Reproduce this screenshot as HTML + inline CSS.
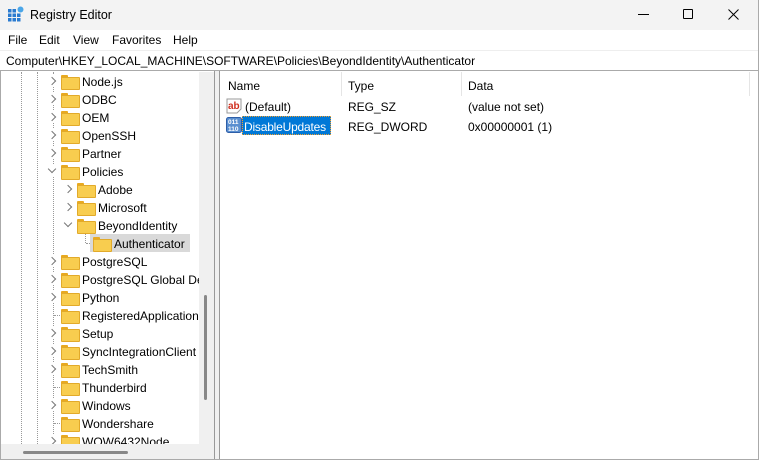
<!DOCTYPE html><html><head><style>
*{margin:0;padding:0;box-sizing:border-box}
body{width:759px;height:460px;overflow:hidden;background:#fff;font-family:"Liberation Sans",sans-serif;font-size:12px;color:#000;position:relative}
.a{position:absolute;white-space:nowrap}
.fold{position:absolute;width:17px;height:13px}
.fold:before{content:"";position:absolute;left:0;top:0;width:7px;height:3px;background:#e8a920;border-radius:1px 1px 0 0}
.fold:after{content:"";position:absolute;left:0;top:2px;width:17px;height:11px;background:#f8cd4f;border:1px solid #e2aa2a;border-radius:1px}
.chev{position:absolute;width:6px;height:6px;border-right:1.3px solid #777;border-bottom:1.3px solid #777;transform:rotate(-45deg)}
.chev.d{transform:rotate(45deg)}
.dot{position:absolute;border-left:1px dotted #999}
.hd{position:absolute;border-top:1px dotted #999;height:0}
</style></head><body>
<div class="a" style="left:0;top:0;width:759px;height:30px;background:#f3f3f3"></div>
<svg class="a" style="left:8px;top:6px" width="16" height="16" viewBox="0 0 16 16"><g fill="#2a7bd0"><rect x="0" y="3" width="3.5" height="3.5"/><rect x="4.5" y="3" width="3.5" height="3.5"/><rect x="0" y="7.5" width="3.5" height="3.5"/><rect x="4.5" y="7.5" width="3.5" height="3.5"/><rect x="9" y="7.5" width="3.5" height="3.5"/><rect x="0" y="12" width="3.5" height="3.5"/><rect x="4.5" y="12" width="3.5" height="3.5"/><rect x="9" y="12" width="3.5" height="3.5"/></g><circle cx="12.5" cy="3.5" r="3" fill="#4aa6e8"/></svg>
<div class="a" style="left:30px;top:8px;font-size:12.5px">Registry Editor</div>
<div class="a" style="left:638px;top:14px;width:11px;border-top:1px solid #000"></div>
<div class="a" style="left:683px;top:9px;width:10px;height:10px;border:1px solid #000;border-radius:1px"></div>
<svg class="a" style="left:728px;top:9px" width="11" height="11"><path d="M0.5 0.5L10.5 10.5M10.5 0.5L0.5 10.5" stroke="#000" stroke-width="1"/></svg>
<div class="a" style="left:8px;top:33px">File</div>
<div class="a" style="left:39px;top:33px">Edit</div>
<div class="a" style="left:73px;top:33px">View</div>
<div class="a" style="left:112px;top:33px">Favorites</div>
<div class="a" style="left:173px;top:33px">Help</div>
<div class="a" style="left:0;top:50px;width:759px;height:21px;background:#fff;border-top:1px solid #eee;border-bottom:1px solid #aaa"></div>
<div class="a" style="left:6px;top:54px">Computer\HKEY_LOCAL_MACHINE\SOFTWARE\Policies\BeyondIdentity\Authenticator</div>
<div class="a" style="left:0;top:71px;width:1px;height:389px;background:#aaa"></div>
<div class="a" style="left:758px;top:0;width:1px;height:460px;background:#aaa"></div>
<div class="a" style="left:0;top:459px;width:759px;height:1px;background:#aaa"></div>
<div class="a" style="left:199px;top:72px;width:15px;height:372px;background:#f0f0f0"></div>
<div class="a" style="left:204px;top:295px;width:3px;height:105px;background:#888;border-radius:2px"></div>
<div class="a" style="left:1px;top:444px;width:213px;height:15px;background:#f0f0f0"></div>
<div class="a" style="left:23px;top:451px;width:105px;height:3px;background:#888;border-radius:2px"></div>
<div class="a" style="left:214px;top:71px;width:1px;height:388px;background:#999"></div>
<div class="a" style="left:215px;top:71px;width:4px;height:388px;background:#f0f0f0"></div>
<div class="a" style="left:219px;top:71px;width:1px;height:388px;background:#999"></div>
<div class="dot" style="left:21px;top:72px;height:372px"></div>
<div class="dot" style="left:37px;top:72px;height:372px"></div>
<div class="dot" style="left:53px;top:72px;height:372px"></div>
<div class="dot" style="left:85px;top:234px;height:9px"></div>
<div class="hd" style="left:86px;top:243px;width:6px"></div>
<div class="hd" style="left:54px;top:315px;width:6px"></div>
<div class="hd" style="left:54px;top:387px;width:6px"></div>
<div class="hd" style="left:54px;top:423px;width:6px"></div>
<div class="a" style="left:90px;top:234px;width:100px;height:18px;background:#d9d9d9"></div>
<div id="tree"></div>
<script>
var rows=[["Node.js",0,1],["ODBC",0,1],["OEM",0,1],["OpenSSH",0,1],["Partner",0,1],["Policies",0,2],["Adobe",1,1],["Microsoft",1,1],["BeyondIdentity",1,2],["Authenticator",2,0],["PostgreSQL",0,1],["PostgreSQL Global De",0,1],["Python",0,1],["RegisteredApplication",0,0],["Setup",0,1],["SyncIntegrationClient",0,1],["TechSmith",0,1],["Thunderbird",0,0],["Windows",0,1],["Wondershare",0,0],["WOW6432Node",0,1]];
var h="";rows.forEach(function(r,i){var cy=81+i*18,fx=61+r[1]*16;
if(r[2])h+='<div class="a" style="left:'+(fx-15)+'px;top:'+(cy-6)+'px;width:12px;height:12px;background:#fff"></div><div class="chev'+(r[2]==2?' d':'')+'" style="left:'+(fx-12)+'px;top:'+(cy-(r[2]==2?5:3))+'px"></div>';
h+='<div class="fold" style="left:'+fx+'px;top:'+(cy-6)+'px"></div><div class="a" style="left:'+(fx+21)+'px;top:'+(cy-6)+'px">'+r[0]+'</div>';});
document.getElementById("tree").innerHTML='<div class="a" style="left:1px;top:72px;width:198px;height:372px;overflow:hidden">'+h.replace(/left:(\d+)px;top:(\d+)px/g,function(m,a,b){return "left:"+(a-1)+"px;top:"+(b-72)+"px"})+'</div>';
</script>
<div class="a" style="left:220px;top:72px;width:538px;height:387px;background:#fff"></div>
<div class="a" style="left:228px;top:79px">Name</div>
<div class="a" style="left:341px;top:72px;width:1px;height:24px;background:#e5e5e5"></div>
<div class="a" style="left:348px;top:79px">Type</div>
<div class="a" style="left:461px;top:72px;width:1px;height:24px;background:#e5e5e5"></div>
<div class="a" style="left:468px;top:79px">Data</div>
<div class="a" style="left:749px;top:72px;width:1px;height:24px;background:#e5e5e5"></div>
<svg class="a" style="left:226px;top:98px" width="16" height="16"><path d="M1 1h14v10l-4 4H1z" fill="#fff" stroke="#999"/><text x="2" y="11" font-family="Liberation Sans" font-size="10" font-weight="bold" fill="#d03020">ab</text></svg>
<div class="a" style="left:245px;top:100px">(Default)</div>
<div class="a" style="left:348px;top:100px">REG_SZ</div>
<div class="a" style="left:468px;top:100px">(value not set)</div>
<svg class="a" style="left:226px;top:117px" width="16" height="16"><rect x="0.5" y="0.5" width="15" height="15" rx="2" fill="#5a8fd0" stroke="#2d5ea8"/><text x="2" y="7" font-family="Liberation Sans" font-size="6.5" font-weight="bold" fill="#fff">011</text><text x="2" y="14" font-family="Liberation Sans" font-size="6.5" font-weight="bold" fill="#fff">110</text></svg>
<div class="a" style="left:242px;top:116px;width:89px;height:19px;background:#0078d7;border:1px dotted #f0a030"></div>
<div class="a" style="left:244px;top:120px;color:#fff;letter-spacing:-0.2px">DisableUpdates</div>
<div class="a" style="left:348px;top:120px">REG_DWORD</div>
<div class="a" style="left:468px;top:120px">0x00000001 (1)</div>
</body></html>
